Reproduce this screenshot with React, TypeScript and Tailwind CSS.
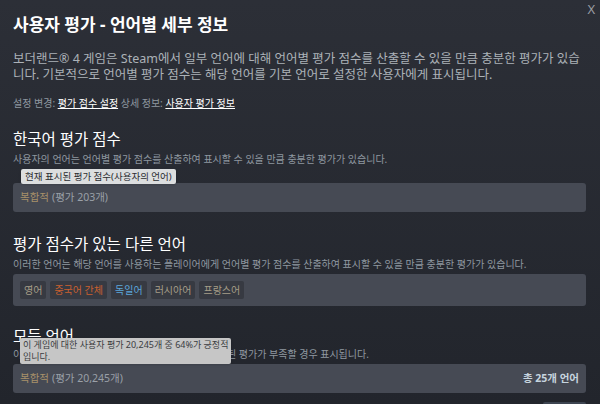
import React from "react";

const tags = [
  { name: "영어", color: "text-[#a69e88]" },
  { name: "중국어 간체", color: "text-[#c9602f]" },
  { name: "독일어", color: "text-[#5ba6dc]" },
  { name: "러시아어", color: "text-[#a69e88]" },
  { name: "프랑스어", color: "text-[#a69e88]" },
];

const App: React.FC = () => {
  return (
    <div
      className="w-[600px] h-[404px] overflow-hidden bg-gradient-to-b from-[#2c2f37] to-[#22252c] text-[#acb2b8] relative"
      style={{ fontFamily: '"Noto Sans", "Noto Sans CJK KR", sans-serif' }}
    >
      {/* close */}
      <div className="absolute top-0 right-[5px] text-[#9a9da3] text-[13px]">X</div>

      <div className="pl-[13px] pr-[14px] pt-[12px]">
        <h1 className="text-white text-[17px] font-bold leading-[26px]">
          사용자 평가 - 언어별 세부 정보
        </h1>

        <p className="mt-[13px] text-[12.5px] leading-[16px] text-[#acb2b8]">
          보더랜드® 4 게임은 Steam에서 일부 언어에 대해 언어별 평가 점수를 산출할 수 있을 만큼 충분한 평가가 있습니다. 기본적으로 언어별 평가 점수는 해당 언어를 기본 언어로 설정한 사용자에게 표시됩니다.
        </p>

        <div className="mt-[13px] text-[10px] leading-[14px] text-[#8f98a0]">
          설정 변경: <span className="text-white underline">평가 점수 설정</span> 상세 정보:{" "}
          <span className="text-white underline">사용자 평가 정보</span>
        </div>

        {/* Korean */}
        <div className="mt-[18px]">
          <h2 className="text-white text-[15.5px] leading-[22px]">한국어 평가 점수</h2>
          <div className="mt-[2px] text-[10px] leading-[15px] text-[#8f98a0]">
            사용자의 언어는 언어별 평가 점수를 산출하여 표시할 수 있을 만큼 충분한 평가가 있습니다.
          </div>
          <div className="relative mt-[16px]">
            <div className="absolute left-[8px] -top-[14px] z-10 bg-[#dcdedf] text-[#2b2d31] text-[9.5px] leading-[13px] px-[4px] py-[1px] rounded-[2px] shadow">
              현재 표시된 평가 점수(사용자의 언어)
            </div>
            <div className="h-[29px] rounded-[3px] bg-[#464a54] flex items-center px-[7px] text-[10.5px]">
              <span className="text-[#a8916a]">복합적</span>
              <span className="ml-[3px] text-[#9aa0a8]">(평가 203개)</span>
            </div>
          </div>
        </div>

        {/* other languages */}
        <div className="mt-[21px]">
          <h2 className="text-white text-[15.5px] leading-[22px]">평가 점수가 있는 다른 언어</h2>
          <div className="mt-[2px] text-[10px] leading-[15px] text-[#8f98a0]">
            이러한 언어는 해당 언어를 사용하는 플레이어에게 언어별 평가 점수를 산출하여 표시할 수 있을 만큼 충분한 평가가 있습니다.
          </div>
          <div className="mt-[2px] h-[32px] rounded-[3px] bg-[#464a54] flex items-center gap-[4px] px-[7px]">
            {tags.map((t) => (
              <span
                key={t.name}
                className={`h-[18px] flex items-center px-[4px] rounded-[2px] bg-[#373a42] text-[10px] ${t.color}`}
              >
                {t.name}
              </span>
            ))}
          </div>
        </div>

        {/* all languages */}
        <div className="mt-[19px] relative">
          <h2 className="text-white text-[15.5px] leading-[22px]">모든 언어</h2>
          <div className="text-[10px] leading-[15px] text-[#8f98a0]">
            이 게임에 대한 사용자 평가 점수는 모든 언어로 작성된 평가가 부족할 경우 표시됩니다.
          </div>
          <div className="absolute left-[7px] top-[13px] z-10 bg-[#c6c6c6] text-[#3a3c40] text-[9px] leading-[12px] px-[3px] py-[1px] rounded-[2px] shadow">
            <div className="whitespace-nowrap">이 게임에 대한 사용자 평가 20,245개 중 64%가 긍정적</div>
            <div>입니다.</div>
          </div>
          <div className="mt-[2px] h-[29px] rounded-[3px] bg-[#464a54] flex items-center justify-between px-[7px] text-[10.5px]">
            <div>
              <span className="text-[#a8916a]">복합적</span>
              <span className="ml-[3px] text-[#9aa0a8]">(평가 20,245개)</span>
            </div>
            <span className="text-[#c6d4df] font-bold">총 25개 언어</span>
          </div>
          <div className="flex justify-end mt-[9px]">
            <div className="w-[43px] h-[20px] rounded-[2px] bg-[#3d4450]" />
          </div>
        </div>
      </div>
    </div>
  );
};

export default App;
